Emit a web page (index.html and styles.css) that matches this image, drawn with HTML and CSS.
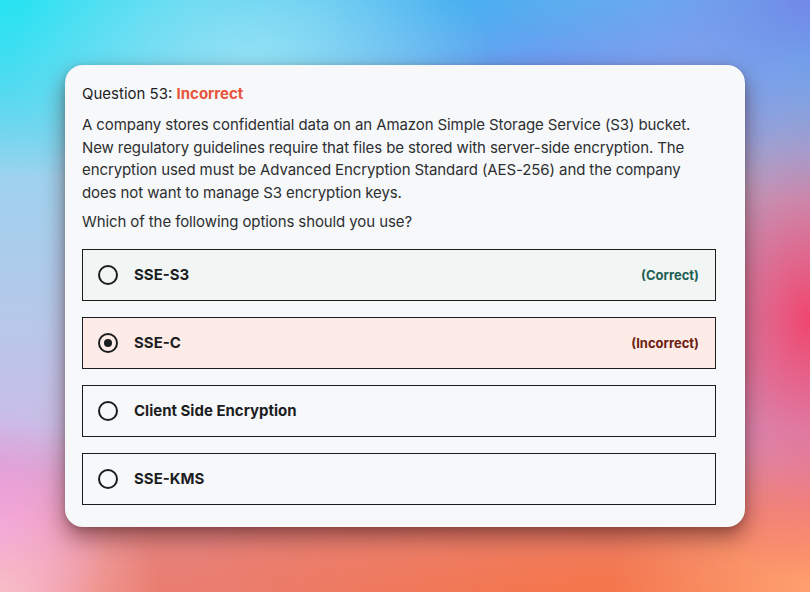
FILE: index.html
```html
<!DOCTYPE html>
<html lang="en">
<head>
<meta charset="utf-8">
<title>Question 53</title>
<link rel="stylesheet" href="styles.css">
</head>
<body>
<div class="stage">
  <div class="card">
    <div class="title">Question 53: <span class="status">Incorrect</span></div>
    <p class="prompt">A company stores confidential data on an Amazon Simple Storage Service (S3) bucket. New regulatory guidelines require that files be stored with server-side encryption. The encryption used must be Advanced Encryption Standard (AES-256) and the company does not want to manage S3 encryption keys.</p>
    <p class="ask">Which of the following options should you use?</p>
    <ul class="options">
      <li class="option correct">
        <span class="radio"></span>
        <span class="label">SSE-S3</span>
        <span class="verdict">(Correct)</span>
      </li>
      <li class="option incorrect">
        <span class="radio checked"></span>
        <span class="label">SSE-C</span>
        <span class="verdict">(Incorrect)</span>
      </li>
      <li class="option">
        <span class="radio"></span>
        <span class="label">Client Side Encryption</span>
      </li>
      <li class="option">
        <span class="radio"></span>
        <span class="label">SSE-KMS</span>
      </li>
    </ul>
  </div>
</div>
</body>
</html>
```

FILE: styles.css
```css
* { box-sizing: border-box; }
html, body { margin: 0; padding: 0; }
body {
  width: 810px;
  height: 592px;
  overflow: hidden;
  font-family: Inter, "Open Sans", sans-serif;
  color: #2d2f31;
}
.stage {
  width: 810px;
  height: 592px;
  padding: 65px 65px 0 65px;
  background:
    radial-gradient(ellipse 240px 150px at 250px 60px, rgba(150,226,245,0.9), rgba(150,226,245,0) 100%),
    radial-gradient(ellipse 300px 180px at 0px 0px, rgba(40,228,242,1), rgba(40,228,242,0) 100%),
    radial-gradient(ellipse 260px 140px at 450px 0px, rgba(60,175,240,0.8), rgba(60,175,240,0) 100%),
    radial-gradient(ellipse 260px 160px at 540px 80px, rgba(140,132,240,0.95), rgba(140,132,240,0) 100%),
    radial-gradient(ellipse 250px 200px at 810px 0px, rgba(115,135,232,1), rgba(115,135,232,0) 100%),
    radial-gradient(ellipse 180px 260px at 810px 320px, rgba(240,70,110,1), rgba(240,70,110,0) 100%),
    radial-gradient(ellipse 200px 160px at 810px 592px, rgba(255,160,110,1), rgba(255,160,110,0) 100%),
    radial-gradient(ellipse 420px 140px at 600px 592px, rgba(245,118,75,1), rgba(245,118,75,0) 100%),
    radial-gradient(ellipse 160px 130px at 0px 592px, rgba(248,190,200,1), rgba(248,190,200,0) 100%),
    radial-gradient(ellipse 110px 120px at 0px 530px, rgba(240,150,240,0.95), rgba(240,150,240,0) 100%),
    radial-gradient(ellipse 300px 110px at 250px 592px, rgba(232,125,115,1), rgba(232,125,115,0) 100%),
    linear-gradient(180deg, #5fd0ef 0%, #9fd2ee 30%, #b8c8ea 55%, #c9bde6 72%, #e2949e 88%, #ec7a66 100%);
}
.card {
  width: 680px;
  height: 462px;
  background: #f7f8fa;
  border-radius: 18px;
  padding: 18px 29px 22px 17px;
  box-shadow: 0 10px 22px rgba(60, 10, 10, 0.5), 0 2px 6px rgba(0,0,0,0.15);
}
.title {
  font-size: 15px;
  line-height: 22px;
  color: #1c1d1f;
}
.status {
  color: #e8553a;
  font-weight: 700;
}
.prompt {
  margin: 9px 0 0 0;
  font-size: 15px;
  line-height: 22.5px;
  letter-spacing: -0.1px;
}
.ask {
  margin: 7px 0 0 0;
  font-size: 15px;
  line-height: 22.5px;
  letter-spacing: -0.1px;
}
.options {
  list-style: none;
  margin: 15px 0 0 0;
  padding: 0;
  display: flex;
  flex-direction: column;
  gap: 16px;
}
.option {
  height: 52px;
  border: 1px solid #1c1d1f;
  display: flex;
  align-items: center;
  padding: 0 16px 0 15px;
  background: #f7f8fa;
}
.option.correct { background: #f1f5f4; }
.option.incorrect { background: #fcebe7; }
.radio {
  width: 20px;
  height: 20px;
  border: 2px solid #1c1d1f;
  border-radius: 50%;
  flex: none;
  display: flex;
  align-items: center;
  justify-content: center;
}
.radio.checked::after {
  content: "";
  width: 8px;
  height: 8px;
  border-radius: 50%;
  background: #1c1d1f;
}
.label {
  margin-left: 16px;
  font-weight: 700;
  font-size: 15px;
  color: #1c1d1f;
  flex: 1;
}
.verdict {
  font-weight: 700;
  font-size: 13px;
}
.correct .verdict { color: #1e6055; }
.incorrect .verdict { color: #6d1d13; }
```
